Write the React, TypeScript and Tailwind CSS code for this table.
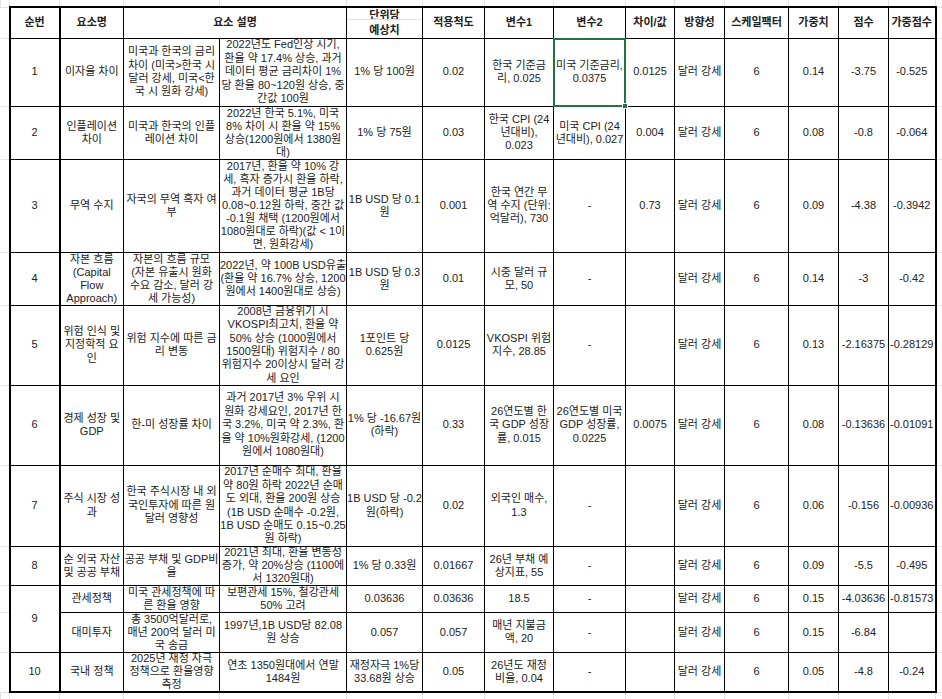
import * as React from 'react'

type Item = {
    no?: string
    span?: number
    h: string
    ih: string
    name: string
    desc: string
    example: string
    unit: string
    scale: string
    v1: string
    v2: string
    diff: string
    w: string
    score: string
    ws: string
    last?: boolean
    tight?: boolean
}

const rows: Item[] = [
    {
        no: '1', h: 'h-[68px]', ih: 'max-h-[67px]', name: '이자율 차이',
        desc: '미국과 한국의 금리\n차이 (미국>한국 시\n달러 강세, 미국<한\n국 시 원화 강세)',
        example: '2022년도 Fed인상 시기,\n환율 약 17.4% 상승, 과거\n데이터 평균 금리차이 1%\n당 환율 80~120원 상승, 중\n간값 100원',
        unit: '1% 당 100원', scale: '0.02', v1: '한국 기준금\n리, 0.025', v2: '미국 기준금리,\n0.0375',
        diff: '0.0125', w: '0.14', score: '-3.75', ws: '-0.525',
    },
    {
        no: '2', h: 'h-[53px]', ih: 'max-h-[52px]', name: '인플레이션\n차이',
        desc: '미국과 한국의 인플\n레이션 차이',
        example: '2022년 한국 5.1%, 미국\n8% 차이 시 환율 약 15%\n상승(1200원에서 1380원\n대)',
        unit: '1% 당 75원', scale: '0.03', v1: '한국 CPI (24\n년대비),\n0.023', v2: '미국 CPI (24\n년대비), 0.027',
        diff: '0.004', w: '0.08', score: '-0.8', ws: '-0.064', tight: true,
    },
    {
        no: '3', h: 'h-[93px]', ih: 'max-h-[92px]', name: '무역 수지',
        desc: '자국의 무역 흑자 여\n부',
        example: '2017년, 환율 약 10% 강\n세, 흑자 증가시 환율 하락,\n과거 데이터 평균 1B당\n0.08~0.12원 하락, 중간 값\n-0.1원 채택 (1200원에서\n1080원대로 하락)(값 < 1이\n면, 원화강세)',
        unit: '1B USD 당 0.1\n원', scale: '0.001', v1: '한국 연간 무\n역 수지 (단위:\n억달러), 730', v2: '-',
        diff: '0.73', w: '0.09', score: '-4.38', ws: '-0.3942', tight: true,
    },
    {
        no: '4', h: 'h-[53px]', ih: 'max-h-[52px]', name: '자본 흐름\n(Capital\nFlow\nApproach)',
        desc: '자본의 흐름 규모\n(자본 유출시 원화\n수요 감소, 달러 강\n세 가능성)',
        example: '2022년, 약 100B USD유출\n(환율 약 16.7% 상승, 1200\n원에서 1400원대로 상승)',
        unit: '1B USD 당 0.3\n원', scale: '0.01', v1: '시중 달러 규\n모, 50', v2: '-',
        diff: '', w: '0.14', score: '-3', ws: '-0.42', tight: true,
    },
    {
        no: '5', h: 'h-[80px]', ih: 'max-h-[79px]', name: '위험 인식 및\n지정학적 요\n인',
        desc: '위험 지수에 따른 금\n리 변동',
        example: '2008년 금융위기 시\nVKOSPI최고치, 환율 약\n50% 상승 (1000원에서\n1500원대) 위험지수 / 80\n위험지수 20이상시 달러 강\n세 요인',
        unit: '1포인트 당\n0.625원', scale: '0.0125', v1: 'VKOSPI 위험\n지수, 28.85', v2: '-',
        diff: '', w: '0.13', score: '-2.16375', ws: '-0.28129',
    },
    {
        no: '6', h: 'h-[80px]', ih: 'max-h-[79px]', name: '경제 성장 및\nGDP',
        desc: '한-미 성장률 차이',
        example: '과거 2017년 3% 우위 시\n원화 강세요인, 2017년 한\n국 3.2%, 미국 약 2.3%, 환\n율 약 10%원화강세, (1200\n원에서 1080원대)',
        unit: '1% 당 -16.67원\n(하락)', scale: '0.33', v1: '26연도별 한\n국 GDP 성장\n률, 0.015', v2: '26연도별 미국\nGDP 성장률,\n0.0225',
        diff: '0.0075', w: '0.08', score: '-0.13636', ws: '-0.01091',
    },
    {
        no: '7', h: 'h-[81px]', ih: 'max-h-[80px]', name: '주식 시장 성\n과',
        desc: '한국 주식시장 내 외\n국인투자에 따른 원\n달러 영향성',
        example: '2017년 순매수 최대, 환율\n약 80원 하락 2022년 순매\n도 외대, 환율 200원 상승\n(1B USD 순매수 -0.2원,\n1B USD 순매도 0.15~0.25\n원 하락)',
        unit: '1B USD 당 -0.2\n원(하락)', scale: '0.02', v1: '외국인 매수,\n1.3', v2: '-',
        diff: '', w: '0.06', score: '-0.156', ws: '-0.00936',
    },
    {
        no: '8', h: 'h-[39px]', ih: 'max-h-[38px]', name: '순 외국 자산\n및 공공 부채',
        desc: '공공 부채 및 GDP비\n율',
        example: '2021년 최대, 환율 변동성\n증가, 약 20%상승 (1100에\n서 1320원대)',
        unit: '1% 당 0.33원', scale: '0.01667', v1: '26년 부채 예\n상지표, 55', v2: '-',
        diff: '', w: '0.09', score: '-5.5', ws: '-0.495', tight: true,
    },
    {
        no: '9', span: 2, h: 'h-[27px]', ih: 'max-h-[26px]', name: '관세정책',
        desc: '미국 관세정책에 따\n른 환율 영향',
        example: '보편관세 15%, 철강관세\n50% 고려',
        unit: '0.03636', scale: '0.03636', v1: '18.5', v2: '-',
        diff: '', w: '0.15', score: '-4.03636', ws: '-0.81573', tight: true,
    },
    {
        h: 'h-[40px]', ih: 'max-h-[39px]', name: '대미투자',
        desc: '총 3500억달러로,\n매년 200억 달러 미\n국 송금',
        example: '1997년,1B USD당 82.08\n원 상승',
        unit: '0.057', scale: '0.057', v1: '매년 지불금\n액, 20', v2: '-',
        diff: '', w: '0.15', score: '-6.84', ws: '', tight: true,
    },
    {
        no: '10', h: 'h-[40px]', ih: 'max-h-[38px]', name: '국내 정책',
        desc: '2025년 재정 자극\n정책으로 환율영향\n측정',
        example: '연초 1350원대에서 연말\n1484원',
        unit: '재정자극 1%당\n33.68원 상승', scale: '0.05', v1: '26년도 재정\n비율, 0.04', v2: '-',
        diff: '', w: '0.05', score: '-4.8', ws: '-0.24', last: true, tight: true,
    },
]

const grid = 'border-[#e2e3e3]'

function Cell({ children, className = '', rowSpan, colSpan }: { children?: React.ReactNode; className?: string; rowSpan?: number; colSpan?: number }) {
    return (
        <td
            rowSpan={rowSpan}
            colSpan={colSpan}
            className={`border border-black p-0 text-center align-middle ${className}`}
        >
            {children}
        </td>
    )
}

// keeps the sheet's own line breaks, no extra wrapping
function Lines({ text, h }: { text: string; h: string }) {
    return (
        <div className={`${h} overflow-hidden flex flex-col justify-center items-center`}>
            {text.split('\n').map((l, i) => (
                <div key={i} className="whitespace-pre">{l}</div>
            ))}
        </div>
    )
}

export default function App() {
    const marginRow = (
        <tr className="h-[7px]">
            {Array.from({ length: 16 }).map((_, i) => (
                <td key={i} className={`border-x ${grid} p-0`} />
            ))}
        </tr>
    )

    return (
        <div className="w-[942px] h-[699px] overflow-hidden bg-white text-[#222] text-[11px] leading-[13.4px] font-['Liberation_Sans','Noto_Sans_CJK_KR',sans-serif]">
            <table className="table-fixed border-collapse w-[942px]">
                <colgroup>
                    <col className="w-[9px]" />
                    <col className="w-[50px]" />
                    <col className="w-[64px]" />
                    <col className="w-[96px]" />
                    <col className="w-[127px]" />
                    <col className="w-[76px]" />
                    <col className="w-[62px]" />
                    <col className="w-[69px]" />
                    <col className="w-[72px]" />
                    <col className="w-[49px]" />
                    <col className="w-[50px]" />
                    <col className="w-[64px]" />
                    <col className="w-[50px]" />
                    <col className="w-[50px]" />
                    <col className="w-[47px]" />
                    <col className="w-[7px]" />
                </colgroup>
                <tbody>
                    {marginRow}

                    {/* header */}
                    <tr className="h-[31px] font-bold">
                        <td className={`border-y ${grid} p-0`} />
                        <Cell className="border-t-2 border-l-2 border-r-2">순번</Cell>
                        <Cell className="border-t-2">요소명</Cell>
                        <Cell className="border-t-2" colSpan={2}>요소 설명</Cell>
                        <Cell className="border-t-2 !align-top">
                            <div className="flex flex-col h-[29px]">
                                <div className="h-[11px] leading-[14px] overflow-visible">단위당</div>
                                <div className={`flex-1 border-t ${grid} pt-[3px] leading-[14px]`}>예상치</div>
                            </div>
                        </Cell>
                        <Cell className="border-t-2">적용척도</Cell>
                        <Cell className="border-t-2">변수1</Cell>
                        <Cell className="border-t-2">변수2</Cell>
                        <Cell className="border-t-2">차이/값</Cell>
                        <Cell className="border-t-2">방향성</Cell>
                        <Cell className="border-t-2">스케일팩터</Cell>
                        <Cell className="border-t-2">가중치</Cell>
                        <Cell className="border-t-2">점수</Cell>
                        <Cell className="border-t-2 border-r-2">가중점수</Cell>
                        <td className={`border-y ${grid} p-0`} />
                    </tr>

                    {rows.map((r, i) => {
                        const b = r.last ? 'border-b-2' : ''
                        const lh = r.tight ? 'leading-[13px]' : ''
                        const txt = (t: string) => <Lines text={t} h={r.ih} />
                        return (
                            <tr key={i} className={`${r.h} ${lh}`}>
                                <td className={`border-y ${grid} p-0`} />
                                {r.no !== undefined && (
                                    <Cell rowSpan={r.span} className={`border-l-2 border-r-2 ${b}`}>{r.no}</Cell>
                                )}
                                <Cell className={b}>{txt(r.name)}</Cell>
                                <Cell className={b}>{txt(r.desc)}</Cell>
                                <Cell className={b}>{txt(r.example)}</Cell>
                                <Cell className={b}>{txt(r.unit)}</Cell>
                                <Cell className={b}>{r.scale}</Cell>
                                <Cell className={b}>{txt(r.v1)}</Cell>
                                {i === 0 ? (
                                    <Cell className={`relative ${b}`}>
                                        <div className="absolute inset-[-1px] border-2 border-[#217346] pointer-events-none">
                                            <div className="absolute right-[-4px] bottom-[-4px] w-[6px] h-[6px] bg-[#217346] border border-white" />
                                        </div>
                                        {txt(r.v2)}
                                    </Cell>
                                ) : (
                                    <Cell className={b}>{r.v2}</Cell>
                                )}
                                <Cell className={b}>{r.diff}</Cell>
                                <Cell className={b}>달러 강세</Cell>
                                <Cell className={b}>6</Cell>
                                <Cell className={b}>{r.w}</Cell>
                                <Cell className={b}>{r.score}</Cell>
                                <Cell className={`border-r-2 ${b}`}>{r.ws}</Cell>
                                <td className={`border-y ${grid} p-0`} />
                            </tr>
                        )
                    })}

                    {marginRow}
                </tbody>
            </table>
        </div>
    )
}
